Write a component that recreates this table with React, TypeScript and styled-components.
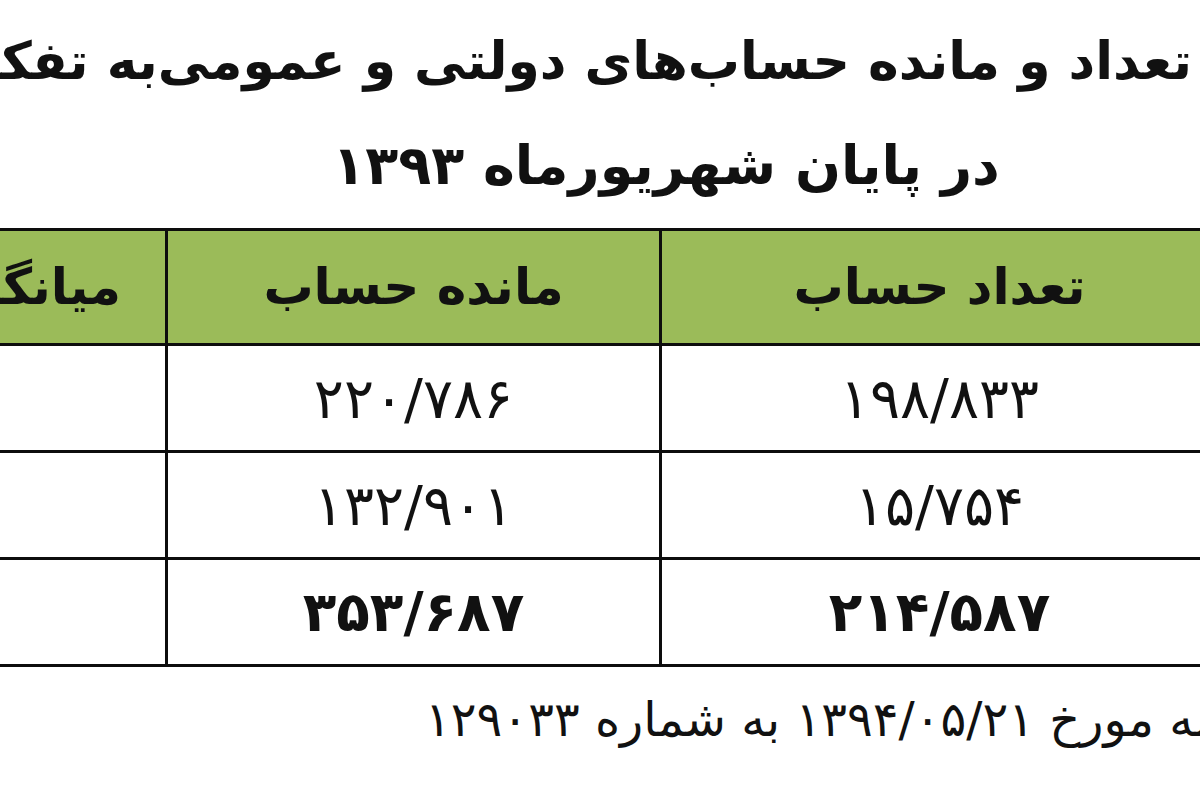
import styled, {createGlobalStyle} from "styled-components";

const GlobalStyle = createGlobalStyle`
    html, body {
        margin: 0;
        padding: 0;
        background: #ffffff;
        overflow: hidden;
    }
`;

const Sheet = styled.div`
    width: 1200px;
    height: 800px;
    overflow: hidden;
    direction: rtl;
    background: #ffffff;
    color: #111111;
    font-family: "DejaVu Sans", sans-serif;
`;

const Heading = styled.h1`
    margin: 0;
    height: 122px;
    display: flex;
    align-items: center;
    padding-right: 8px;
    white-space: nowrap;
    font-size: 52px;
    font-weight: bold;
`;

const SubHeading = styled.h2`
    box-sizing: border-box;
    margin: 0;
    height: 106px;
    padding: 12px 0 0 132px;
    display: flex;
    align-items: flex-start;
    justify-content: center;
    white-space: nowrap;
    font-size: 54px;
    font-weight: bold;
    line-height: 1.2;
`;

const TableWrap = styled.div`
    width: 1720px;
    margin-right: -20px;
`;

const Table = styled.table`
    width: 100%;
    border-collapse: collapse;
    table-layout: fixed;
    border-top: 3px solid #0d0d0d;
    border-bottom: 3px solid #0d0d0d;
`;

const HeadCell = styled.th<{ $w: number; $inset?: number }>`
    width: ${p => p.$w}px;
    height: 112px;
    padding: 0 ${p => p.$inset ?? 0}px 0 0;
    background: #9bbb59;
    border: 3px solid #0d0d0d;
    border-top: none;
    font-size: 50px;
    font-weight: bold;
    text-align: ${p => (p.$inset ? "right" : "center")};
    white-space: nowrap;
`;

const Cell = styled.td<{ $bold?: boolean }>`
    height: 104px;
    padding: 0;
    border: 3px solid #0d0d0d;
    text-align: center;
    font-size: ${p => (p.$bold ? "55px" : "56px")};
    font-weight: ${p => (p.$bold ? "bold" : "normal")};
    white-space: nowrap;
`;

const NoteRow = styled.div`
    display: flex;
    justify-content: flex-end;
    padding-left: 425px;
    margin-top: 24px;
`;

const Note = styled.p`
    margin: 0;
    flex: none;
    white-space: nowrap;
    font-size: 48px;
    line-height: 1.2;
`;

const rows = [
    {count: "۱۹۸/۸۳۳", balance: "۲۲۰/۷۸۶", bold: false},
    {count: "۱۵/۷۵۴", balance: "۱۳۲/۹۰۱", bold: false},
    {count: "۲۱۴/۵۸۷", balance: "۳۵۳/۶۸۷", bold: true},
];

export default function App() {
    return (
        <Sheet>
            <GlobalStyle/>
            <Heading>تعداد و مانده حساب‌های دولتی و عمومی‌به تفکیک بانک‌ها</Heading>
            <SubHeading>در پایان شهریورماه ۱۳۹۳</SubHeading>
            <TableWrap>
                <Table>
                    <thead>
                    <tr>
                        <HeadCell $w={555}>تعداد حساب</HeadCell>
                        <HeadCell $w={491}>مانده حساب</HeadCell>
                        <HeadCell $w={674} $inset={44}>میانگین مانده</HeadCell>
                    </tr>
                    </thead>
                    <tbody>
                    {rows.map(r => (
                        <tr key={r.count}>
                            <Cell $bold={r.bold}>{r.count}</Cell>
                            <Cell $bold={r.bold}>{r.balance}</Cell>
                            <Cell $bold={r.bold}/>
                        </tr>
                    ))}
                    </tbody>
                </Table>
            </TableWrap>
            <NoteRow>
                <Note>بر اساس نامه مورخ ۱۳۹۴/۰۵/۲۱ به شماره ۱۲۹۰۳۳</Note>
            </NoteRow>
        </Sheet>
    );
}
